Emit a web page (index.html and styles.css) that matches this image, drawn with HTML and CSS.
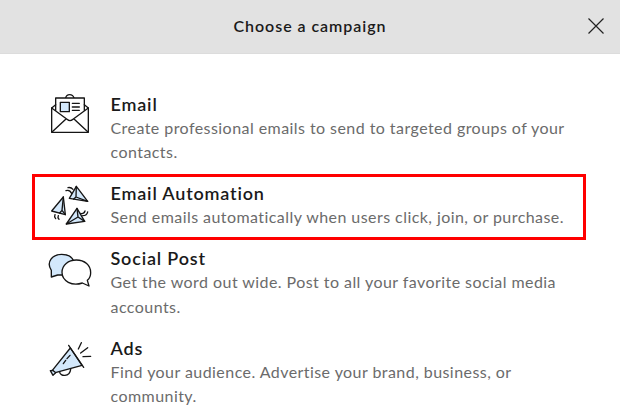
FILE: index.html
```html
<!DOCTYPE html>
<html lang="en">
  <head>
    <meta charset="UTF-8" />
    <meta name="viewport" content="width=device-width, initial-scale=1.0" />
    <title>Choose a campaign</title>
    <link rel="stylesheet" href="styles.css">
  </head>
  <body>
    <header class="header">
      <h1>Choose a campaign</h1>
      <button class="close" aria-label="Close">
        <svg width="16" height="16" viewBox="0 0 16 16"><path d="M.5 .5l15 15M15.5 .5l-15 15" /></svg>
      </button>
    </header>
    <ul class="campaigns">
      <li class="campaign">
        <svg class="icon" viewBox="30 27 120 120">
          <path d="M77 39Q79 29 89 29T102 39" fill="none" />
          <path d="M35 69L47 59V39H133V59L145 69V142H35Z" fill="#fff" />
          <path d="M35 69L81 103Q90 111 99 103L145 69M36 141L78 102M144 141L102 102M47 59V77M133 59V77" fill="none" />
          <path d="M61 52H88V80H61Z" />
          <path d="M97 55H118M97 66H118M97 76H118" />
        </svg>
        <div class="text">
          <h2>Email</h2>
          <p>Create professional emails to send to targeted groups of your contacts.</p>
        </div>
      </li>
      <li class="campaign selected">
        <svg class="icon" viewBox="30 24 120 120">
          <path d="M109 34L143 79L88 70Z" />
          <path d="M109 34L108 66L143 79M108 66L101 72" fill="none" />
          <path d="M70 66L35 108L76 119Z" />
          <path d="M70 66L66 106L76 119M66 106L59 114" fill="none" />
          <path d="M111 100L79 147L134 139Z" />
          <path d="M111 100L114 126L134 139M114 126L79 147" fill="none" />
          <path d="M78 47Q89 43 95 55M84 38Q93 36 99 43M45 119Q42 125 47 131M55 122Q52 128 57 133M122 115Q132 118 135 108M128 122Q141 122 143 111" fill="none" />
        </svg>
        <div class="text">
          <h2>Email Automation</h2>
          <p>Send emails automatically when users click, join, or purchase.</p>
        </div>
      </li>
      <li class="campaign">
        <svg class="icon" viewBox="30 10 120 120">
          <path d="M34 97V77C17 52 38 29 65 29C82 29 96 37 101 49L76 91H53Z" />
          <path d="M147 124L127 115C96 126 66 109 66 83C66 61 85 46 109 46C134 46 152 62 152 84C152 94 148 102 142 107Z" fill="#fff" />
        </svg>
        <div class="text">
          <h2>Social Post</h2>
          <p>Get the word out wide. Post to all your favorite social media accounts.</p>
        </div>
      </li>
      <li class="campaign">
        <svg class="icon" viewBox="30 14 120 120">
          <path d="M59 116C60 130 89 132 92 108" fill="none" />
          <path d="M91 44L126 96L46 118L37 111Z" />
          <path d="M86 36L131 102M31 112L38 111L47 118L39 126Z" />
          <path d="M70 91L77 81M81 76L90 66M115 47L124 28M122 59L143 43M129 70L152 69" fill="none" />
        </svg>
        <div class="text">
          <h2>Ads</h2>
          <p>Find your audience. Advertise your brand, business, or community.</p>
        </div>
      </li>
    </ul>
  </body>
</html>
```
FILE: styles.css
```css
* {
  margin: 0;
  padding: 0;
  box-sizing: border-box;
}
body {
  height: 417px;
  overflow: hidden;
  background: #fff;
  color: #1a1a1a;
  font-family: Lato, "Liberation Sans", sans-serif;
}
.header {
  display: grid;
  grid-template-columns: 1fr auto 1fr;
  align-items: center;
  height: 54px;
  padding: 0 16px 2px;
  background: #e2e2e2;
  border-bottom: 1px solid #dcdcdc;
}
.header h1 {
  grid-column: 2;
  font-size: 16px;
  font-weight: 600;
  letter-spacing: 0.95px;
}
.close {
  justify-self: end;
  width: 16px;
  height: 16px;
  border: 0;
  background: none;
  cursor: pointer;
}
.close svg {
  display: block;
  stroke: #222;
  stroke-width: 1.2;
}
.campaigns {
  list-style: none;
  padding: 31px 34px 0 32px;
}
.campaign {
  display: flex;
  align-items: flex-start;
  gap: 20px;
  padding: 4px 0 6.5px 15px;
  border: 3px solid transparent;
  line-height: 24.4px;
}
.campaign.selected {
  padding-bottom: 7.1px;
  margin-bottom: -0.5px;
  border-color: #f00;
}
.icon {
  flex: none;
  width: 40px;
  height: 40px;
  margin-top: 2px;
  overflow: visible;
  fill: #d3e8fb;
  stroke: #151515;
  stroke-width: 4;
  stroke-linecap: round;
  stroke-linejoin: round;
}
.text {
  width: 462px;
  padding-left: 0.5px;
}
.text h2 {
  font-size: 18px;
  font-weight: 600;
  line-height: 24px;
  letter-spacing: 0.82px;
}
.text p {
  color: #6b6b6b;
  font-size: 16px;
  letter-spacing: 0.44px;
}
```
